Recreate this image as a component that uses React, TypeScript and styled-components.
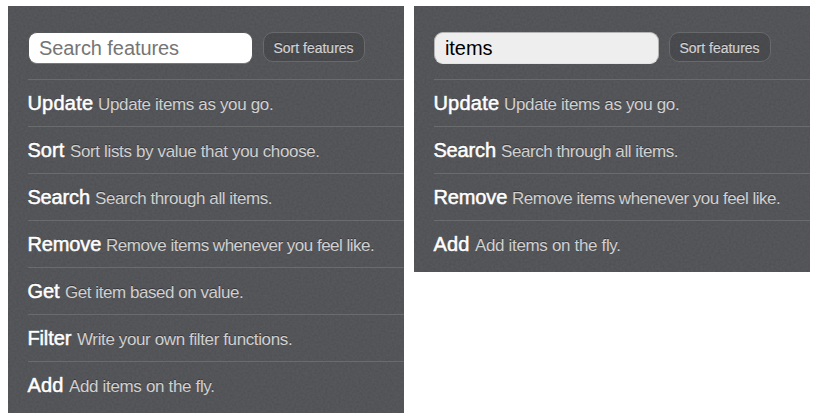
import React from "react";
import styled, { createGlobalStyle } from "styled-components";

const grain = `url("data:image/svg+xml,${encodeURIComponent(
  `<svg xmlns="http://www.w3.org/2000/svg" width="160" height="160"><filter id="n" x="0" y="0" width="100%" height="100%"><feTurbulence type="fractalNoise" baseFrequency="0.45" numOctaves="2" stitchTiles="stitch"/><feColorMatrix values="0 0 0 0 0  0 0 0 0 0  0 0 0 0 0  0.14 0 0 0 -0.03"/></filter><rect width="160" height="160" filter="url(#n)"/></svg>`
)}")`;

const GlobalStyle = createGlobalStyle`
  * { box-sizing: border-box; }
  body {
    margin: 0;
    background: #fff;
    font-family: "Liberation Sans", Arial, Helvetica, sans-serif;
  }
`;

const Page = styled.main`
  display: flex;
  align-items: flex-start;
  gap: 10px;
  width: 820px;
  height: 420px;
  padding: 6px 0 0 8px;
  overflow: hidden;
`;

const Panel = styled.section`
  width: 396px;
  padding: 26px 0 5px 20px;
  background: #57585c ${grain};
`;

const Toolbar = styled.div`
  display: flex;
  align-items: flex-start;
  height: 47px;
`;

const SearchInput = styled.input<{ $filled: boolean }>`
  width: 225px;
  height: 32px;
  margin: 0 10px 0 0;
  padding: 1px 10px 0;
  border: 1px solid ${(p) => (p.$filled ? "#b4b4b4" : "#55565a")};
  border-bottom-color: ${(p) => (p.$filled ? "#e4e4e4" : "#77787a")};
  border-radius: 9px;
  outline: 0;
  background: ${(p) => (p.$filled ? "#eeeeee" : "#ffffff")};
  color: #000;
  font: 20px "Liberation Sans", Arial, sans-serif;
  letter-spacing: -0.08px;

  &::placeholder {
    color: #757575;
    opacity: 1;
  }
`;

const SortButton = styled.button`
  width: 102px;
  height: 30px;
  padding: 1px 1px 0 0;
  border: 1px solid #68696a;
  border-radius: 10px;
  background: rgba(0, 0, 0, 0.12);
  color: #d2d2d2;
  font: 14px "Liberation Sans", Arial, sans-serif;
  -webkit-text-stroke: 0.2px #d2d2d2;
  white-space: nowrap;
  text-shadow: 0 -1px 0 rgba(0, 0, 0, 0.35);
`;

const FeatureList = styled.ul`
  margin: 0;
  padding: 0;
  list-style: none;
`;

const FeatureRow = styled.li`
  display: flex;
  align-items: baseline;
  height: 47px;
  padding-top: 11px;
  border-top: 1px solid #6a6b6c;
  line-height: 24px;
  white-space: nowrap;
  text-shadow: 0 -1px 0 rgba(0, 0, 0, 0.35);
`;

const Name = styled.h3<{ $width: number; $tracking: number }>`
  width: ${(p) => p.$width}px;
  margin: 0;
  color: #fff;
  font-size: 20px;
  font-weight: 400;
  letter-spacing: ${(p) => p.$tracking}px;
  text-indent: -0.6px;
  -webkit-text-stroke: 0.5px #fff;
`;

const Description = styled.p<{ $tracking: number }>`
  margin: 0;
  color: #d0d0d0;
  font-size: 17px;
  letter-spacing: ${(p) => p.$tracking}px;
`;

interface Feature {
  name: string;
  text: string;
  nameWidth: number;
  nameTracking: number;
  tracking: number;
}

const features: Feature[] = [
  { name: "Update", text: "Update items as you go.", nameWidth: 70, nameTracking: 0.25, tracking: -0.35 },
  { name: "Sort", text: "Sort lists by value that you choose.", nameWidth: 42, nameTracking: 0.1, tracking: -0.36 },
  { name: "Search", text: "Search through all items.", nameWidth: 67, nameTracking: -0.15, tracking: -0.44 },
  { name: "Remove", text: "Remove items whenever you feel like.", nameWidth: 78, nameTracking: -0.1, tracking: -0.5 },
  { name: "Get", text: "Get item based on value.", nameWidth: 37, nameTracking: 0, tracking: -0.45 },
  { name: "Filter", text: "Write your own filter functions.", nameWidth: 49, nameTracking: -0.1, tracking: -0.38 },
  { name: "Add", text: "Add items on the fly.", nameWidth: 41, nameTracking: 0.2, tracking: -0.34 },
];

function FeaturePanel({ query }: { query: string }) {
  const shown = features.filter((f) => f.text.includes(query));
  return (
    <Panel>
      <Toolbar>
        <SearchInput
          $filled={query !== ""}
          defaultValue={query}
          placeholder="Search features"
        />
        <SortButton>Sort features</SortButton>
      </Toolbar>
      <FeatureList>
        {shown.map((f) => (
          <FeatureRow key={f.name}>
            <Name $width={f.nameWidth} $tracking={f.nameTracking}>
              {f.name}
            </Name>
            <Description $tracking={f.tracking}>{f.text}</Description>
          </FeatureRow>
        ))}
      </FeatureList>
    </Panel>
  );
}

export default function App() {
  return (
    <>
      <GlobalStyle />
      <Page>
        <FeaturePanel query="" />
        <FeaturePanel query="items" />
      </Page>
    </>
  );
}
